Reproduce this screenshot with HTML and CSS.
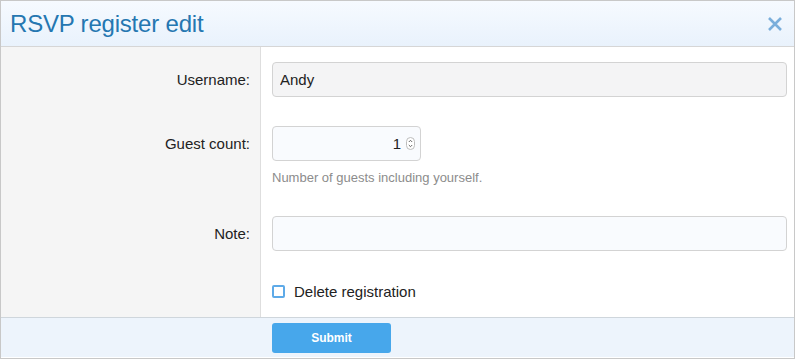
FILE: index.html
```html
<!DOCTYPE html>
<html lang="en">
<head>
  <meta charset="UTF-8">
  <title>RSVP register edit</title>
  <link rel="stylesheet" href="styles.css">
</head>
<body>
  <div class="overlay">
    <div class="overlay-title">
      <h2>RSVP register edit</h2>
      <button class="close" type="button" aria-label="Close">
        <svg width="16" height="16" viewBox="0 0 16 16">
          <path d="M2 2 L14 14 M14 2 L2 14" stroke="#7aaedb" stroke-width="2.6" stroke-linecap="butt" fill="none"/>
        </svg>
      </button>
    </div>

    <form class="form">
      <dl class="form-row">
        <dt>Username:</dt>
        <dd><input type="text" class="input is-disabled" value="Andy" disabled></dd>
      </dl>

      <dl class="form-row">
        <dt>Guest count:</dt>
        <dd>
          <div class="number-box">
            <input type="number" class="input input-number" value="1" min="1">
            <span class="spinner">
              <svg width="9" height="13" viewBox="0 0 9 13">
                <rect x="0.5" y="0.5" width="8" height="12" rx="4" fill="#fff" stroke="#bcbcbc"/>
                <path d="M2.8 5 L4.5 3.3 L6.2 5 M2.8 8 L4.5 9.7 L6.2 8" stroke="#555" stroke-width="0.9" fill="none"/>
              </svg>
            </span>
          </div>
          <p class="hint">Number of guests including yourself.</p>
        </dd>
      </dl>

      <dl class="form-row">
        <dt>Note:</dt>
        <dd><input type="text" class="input"></dd>
      </dl>

      <dl class="form-row form-row-check">
        <dt></dt>
        <dd>
          <label class="checkbox-group">
            <span class="check"></span> Delete registration
          </label>
        </dd>
      </dl>

      <div class="form-submit">
        <button type="submit" class="button">Submit</button>
      </div>
    </form>
  </div>
</body>
</html>
```

FILE: styles.css
```css
body {
  margin: 0;
  font-family: "Liberation Sans", Arial, sans-serif;
  color: #222;
  background: #fff;
}

.overlay {
  width: 795px;
  height: 359px;
  box-sizing: border-box;
  border: 1px solid #c8c8c8;
  background: #fff;
}

.overlay-title {
  display: flex;
  align-items: center;
  justify-content: space-between;
  height: 45px;
  padding: 0 11px 0 9px;
  background: linear-gradient(to bottom, #f6faff, #e9f2fc);
  border-bottom: 1px solid #d6d6d6;
}

.overlay-title h2 {
  margin: 0;
  font-size: 24px;
  font-weight: normal;
  color: #2577b1;
  letter-spacing: -0.2px;
}

.close {
  border: 0;
  background: none;
  padding: 0;
  margin-top: 1px;
  width: 16px;
  height: 16px;
  cursor: pointer;
}

.close svg {
  display: block;
}

.form {
  margin: 0;
}

.form-row {
  display: grid;
  grid-template-columns: 260px 1fr;
  margin: 0;
}

.form-row dt {
  background: #f5f5f5;
  border-right: 1px solid #dedede;
  padding: 15px 10px 0 0;
  text-align: right;
  font-size: 15px;
  line-height: 35px;
  color: #222;
}

.form-row dd {
  margin: 0;
  padding: 15px 7px 14px 11px;
}

.input {
  display: block;
  width: 100%;
  height: 35px;
  box-sizing: border-box;
  padding: 0 7px;
  border: 1px solid #d3d3d3;
  border-radius: 4px;
  background: #f9fbfe;
  font-family: inherit;
  font-size: 15px;
  color: #222;
  outline: none;
}

.input.is-disabled {
  background: #f4f4f5;
  color: #222;
  -webkit-text-fill-color: #222;
}

.number-box {
  position: relative;
  width: 149px;
}

.input-number {
  text-align: right;
  padding-right: 19px;
  -moz-appearance: textfield;
}

.input-number::-webkit-inner-spin-button,
.input-number::-webkit-outer-spin-button {
  -webkit-appearance: none;
  margin: 0;
}

.spinner {
  position: absolute;
  right: 6px;
  top: 11px;
  line-height: 0;
}

.hint {
  margin: 8px 0 0;
  font-size: 13px;
  line-height: 18px;
  color: #8c8c8c;
}

.form-row-check dd {
  padding: 17px 7px 16px 11px;
}

.checkbox-group {
  display: flex;
  align-items: center;
  gap: 9px;
  font-size: 15px;
  line-height: 19px;
  color: #222;
  cursor: pointer;
}

.check {
  width: 9px;
  height: 9px;
  border: 2px solid #5eaae8;
  border-radius: 2px;
  background: #fff;
}

.form-submit {
  height: 40px;
  box-sizing: border-box;
  padding: 5px 0 0 271px;
  border-top: 1px solid #cfd6dc;
  background: #edf4fc;
}

.button {
  width: 119px;
  height: 30px;
  border: 0;
  border-radius: 3px;
  background: #47a7eb;
  color: #fff;
  font-family: inherit;
  font-size: 12px;
  font-weight: bold;
  cursor: pointer;
}
```
